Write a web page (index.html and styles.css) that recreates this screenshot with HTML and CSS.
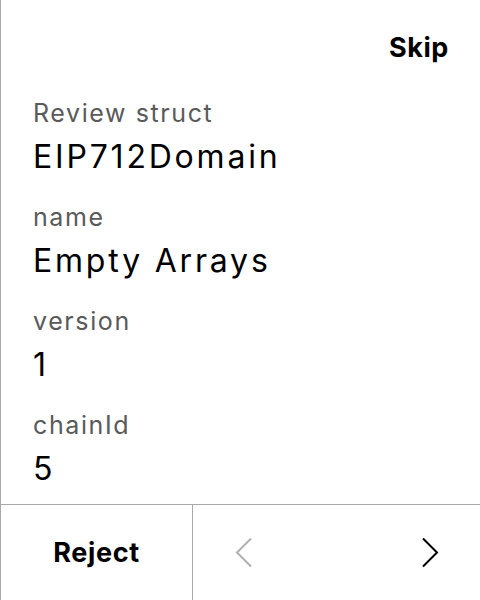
FILE: index.html
```html
<!DOCTYPE html>
<html>
<head>
<meta charset="utf-8">
<link rel="stylesheet" href="styles.css">
</head>
<body>
<div class="screen">
  <header class="top">
    <span class="skip">Skip</span>
  </header>
  <main class="fields">
    <div class="field">
      <div class="label">Review struct</div>
      <div class="value">EIP712Domain</div>
    </div>
    <div class="field">
      <div class="label">name</div>
      <div class="value">Empty Arrays</div>
    </div>
    <div class="field">
      <div class="label">version</div>
      <div class="value">1</div>
    </div>
    <div class="field">
      <div class="label">chainId</div>
      <div class="value">5</div>
    </div>
  </main>
  <footer class="bottom">
    <div class="reject">Reject</div>
    <div class="nav">
      <svg class="chev chev-prev" width="18" height="31" viewBox="0 0 18 31"><path d="M16 1.5 L2 15.5 L16 29.5" fill="none" stroke="currentColor" stroke-width="2"/></svg>
      <svg class="chev chev-next" width="18" height="31" viewBox="0 0 18 31"><path d="M2 1.5 L16 15.5 L2 29.5" fill="none" stroke="currentColor" stroke-width="2"/></svg>
    </div>
  </footer>
</div>
</body>
</html>
```
FILE: styles.css
```css
html, body {
  margin: 0;
  padding: 0;
  background: #fff;
}
body {
  font-family: Inter, "Liberation Sans", sans-serif;
  color: #000;
}
.screen {
  width: 480px;
  height: 600px;
  box-sizing: border-box;
  border-left: 1px solid #a8a8a8;
  display: flex;
  flex-direction: column;
}
.top {
  height: 97px;
  display: flex;
  justify-content: flex-end;
  align-items: flex-start;
  padding: 32px 31px 0 0;
  box-sizing: border-box;
}
.skip {
  font-size: 27px;
  font-weight: 700;
  line-height: 32px;
  letter-spacing: 0.6px;
}
.fields {
  flex: 1;
  padding-left: 32px;
  display: flex;
  flex-direction: column;
  gap: 24px;
}
.field {
  display: flex;
  flex-direction: column;
  gap: 8px;
}
.label {
  font-size: 25px;
  line-height: 32px;
  letter-spacing: 1.6px;
  color: #5a5a5a;
}
.value {
  font-size: 32px;
  line-height: 40px;
  letter-spacing: 2.8px;
  color: #000;
}
.bottom {
  height: 96px;
  border-top: 1px solid #a8a8a8;
  box-sizing: border-box;
  display: flex;
}
.reject {
  width: 191px;
  border-right: 1px solid #a8a8a8;
  display: flex;
  align-items: center;
  justify-content: center;
  font-size: 27px;
  font-weight: 700;
  letter-spacing: 0.6px;
}
.nav {
  flex: 1;
  display: flex;
  align-items: center;
  justify-content: space-between;
  padding: 0 41px 0 42px;
}
.chev { display: block; }
.chev-prev { color: #b0b0b0; }
.chev-next { color: #000; }
```
